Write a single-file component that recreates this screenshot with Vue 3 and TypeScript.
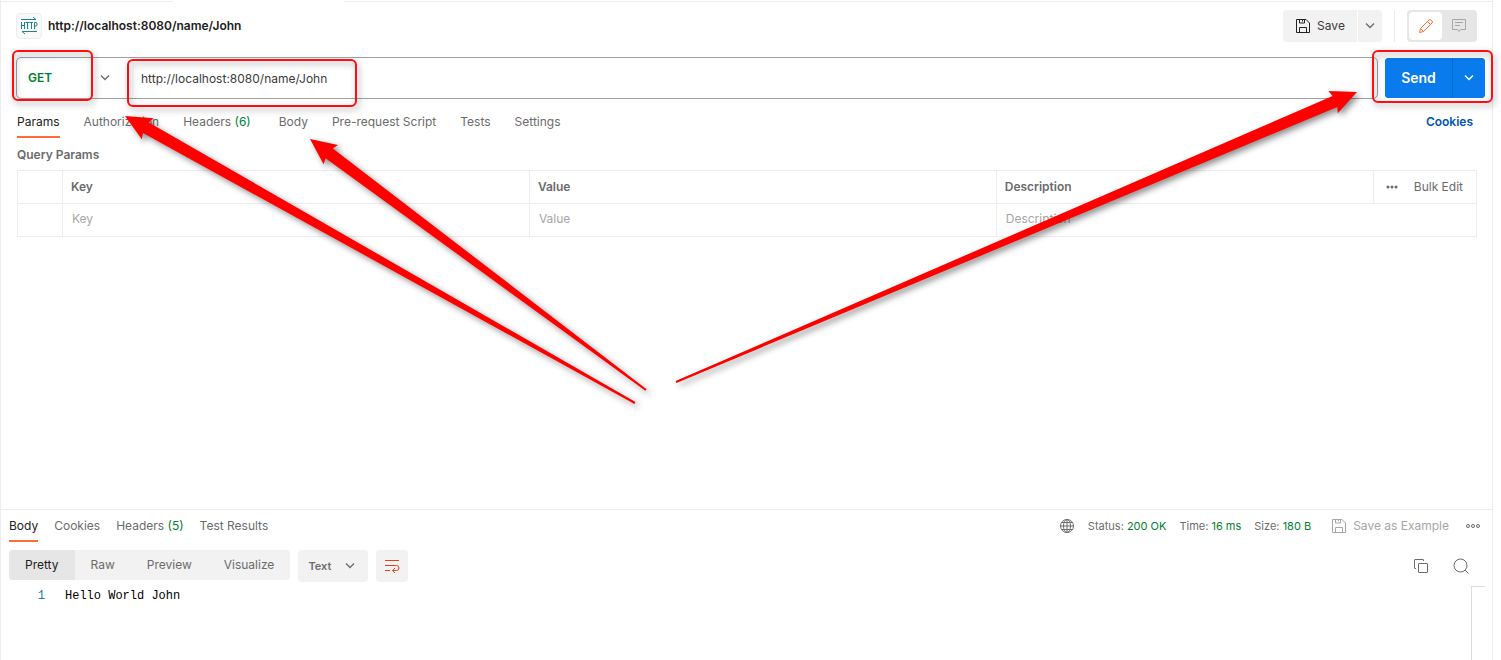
<script setup lang="ts">
import { ref } from 'vue'

interface Tab {
  label: string
  count?: number
}

interface Point {
  x: number
  y: number
}

const method = ref('GET')
const url = ref('http://localhost:8080/name/John')
const format = ref('Text')

const requestTabs: Tab[] = [
  { label: 'Params' },
  { label: 'Authorization' },
  { label: 'Headers', count: 6 },
  { label: 'Body' },
  { label: 'Pre-request Script' },
  { label: 'Tests' },
  { label: 'Settings' },
]
const activeRequestTab = ref('Params')

const responseTabs: Tab[] = [
  { label: 'Body' },
  { label: 'Cookies' },
  { label: 'Headers', count: 5 },
  { label: 'Test Results' },
]
const activeResponseTab = ref('Body')

const views = ['Pretty', 'Raw', 'Preview', 'Visualize']
const activeView = ref('Pretty')

const stats = [
  { label: 'Status:', value: '200 OK' },
  { label: 'Time:', value: '16 ms' },
  { label: 'Size:', value: '180 B' },
]

// Outline of a tapered arrow: a thin tail that widens towards a barbed head.
function arrow(tip: Point, tail: Point): string {
  const length = Math.hypot(tail.x - tip.x, tail.y - tip.y)
  const dx = (tail.x - tip.x) / length
  const dy = (tail.y - tip.y) / length
  const at = (along: number, across: number) =>
    `${(tip.x + dx * along - dy * across).toFixed(1)},${(tip.y + dy * along + dx * across).toFixed(1)}`
  return [at(0, 0), at(26, -12), at(24, -6), at(length, -1), at(length, 1), at(24, 6), at(26, 12)].join(' ')
}

const arrows = [
  arrow({ x: 125, y: 116 }, { x: 635, y: 403 }),
  arrow({ x: 310, y: 139 }, { x: 646, y: 390 }),
  arrow({ x: 1357, y: 92 }, { x: 676, y: 382 }),
]
</script>

<template>
  <main class="workspace">
    <div class="strip"><i class="strip-left"></i><i class="strip-tab"></i><i class="strip-right"></i></div>

    <section class="request">
      <header class="titlebar">
        <span class="http-icon">
          <svg width="18" height="18" viewBox="0 0 18 18" fill="none" stroke="#1a8296" aria-hidden="true">
            <path d="M1 2.5h15M13 0l3 2.5M17 14.5H2M5 17l-3-2.5" />
            <path d="M1.5 5v7M4.5 5v7M1.500 8.500h3M5.500 5.500h4M7.500 5.500V12M9.500 5.500h3.500M11.500 5.500V12M14.500 12V5.500h1.500q1 0 1 1.750t-1 1.750h-1.500" />
          </svg>
        </span>
        <h1>{{ url }}</h1>
        <div class="save-group">
          <button class="save" type="button">
            <svg width="16" height="16" viewBox="0 0 16 16" fill="none" stroke="#212121" aria-hidden="true">
              <path d="M1.500 1.500h9.500l3.500 3.500v9.500h-13zM4.500 1.500v3.500h5v-3.500M4.500 14.500v-5h7v5M7.500 2v1.500" />
            </svg>
            Save
          </button>
          <button class="save-more" type="button" aria-label="More save options">
            <svg width="10" height="6" viewBox="0 0 10 6" fill="none" stroke="#6b6b6b" stroke-width="1.3" aria-hidden="true"><path d="M1 .5l4 4 4-4" /></svg>
          </button>
        </div>
        <div class="mode">
          <button class="on" type="button" aria-label="Edit">
            <svg width="16" height="16" viewBox="0 0 16 16" fill="none" stroke="#ff6c37" aria-hidden="true">
              <path d="M1.500 14.500l1-4L11 2q1-1 2 0l1 1q1 1 0 2l-8.500 8.500zM9.500 3.500l3 3M2.500 10.500l3 3" />
            </svg>
          </button>
          <button type="button" aria-label="Comments">
            <svg width="16" height="16" viewBox="0 0 16 16" fill="none" stroke="#a6a6a6" aria-hidden="true">
              <path d="M1.500 1.500h13v10h-5L8 13.500l-1.500-2h-5zM4 4.500h8M4 7.500h5" />
            </svg>
          </button>
        </div>
      </header>

      <div class="url-row">
        <div class="url-box">
          <div class="method">
            <select v-model="method" aria-label="Method"><option>GET</option><option>POST</option></select>
            <svg width="10" height="6" viewBox="0 0 10 6" fill="none" stroke="#6b6b6b" stroke-width="1.3" aria-hidden="true"><path d="M1 .5l4 4 4-4" /></svg>
            <i class="mark"></i>
          </div>
          <div class="url-field">
            <input v-model="url" type="text" aria-label="Request URL" />
            <i class="mark"></i>
          </div>
        </div>
        <div class="send-group">
          <button class="send" type="button">Send</button>
          <button class="send-more" type="button" aria-label="More send options">
            <svg width="10" height="6" viewBox="0 0 10 6" fill="none" stroke="#fff" stroke-width="1.3" aria-hidden="true"><path d="M1 .5l4 4 4-4" /></svg>
          </button>
          <i class="mark"></i>
        </div>
      </div>

      <nav class="request-nav">
        <div class="tabs" role="tablist">
          <button
            v-for="tab in requestTabs"
            :key="tab.label"
            type="button"
            role="tab"
            :aria-selected="tab.label === activeRequestTab"
            :class="{ active: tab.label === activeRequestTab, counted: tab.count }"
            @click="activeRequestTab = tab.label"
          >{{ tab.label }}<span v-if="tab.count" class="count"> ({{ tab.count }})</span></button>
        </div>
        <a href="#cookies">Cookies</a>
      </nav>

      <h2>Query Params</h2>
      <table>
        <colgroup><col class="c-check" /><col class="c-field" /><col class="c-field" /><col /><col class="c-tools" /></colgroup>
        <thead>
          <tr>
            <th></th>
            <th>Key</th>
            <th>Value</th>
            <th>Description</th>
            <th>
              <div class="tools">
                <button type="button" aria-label="Column options">
                  <svg width="12" height="4" viewBox="0 0 12 4" fill="#6b6b6b" aria-hidden="true"><circle cx="2" cy="2" r="1.500" /><circle cx="6" cy="2" r="1.500" /><circle cx="10" cy="2" r="1.500" /></svg>
                </button>
                <button type="button">Bulk Edit</button>
              </div>
            </th>
          </tr>
        </thead>
        <tbody>
          <tr>
            <td></td>
            <td><input type="text" placeholder="Key" aria-label="Key" /></td>
            <td><input type="text" placeholder="Value" aria-label="Value" /></td>
            <td colspan="2"><input type="text" placeholder="Description" aria-label="Description" /></td>
          </tr>
        </tbody>
      </table>
    </section>

    <section class="response">
      <div class="response-nav">
        <div class="tabs" role="tablist">
          <button
            v-for="tab in responseTabs"
            :key="tab.label"
            type="button"
            role="tab"
            :aria-selected="tab.label === activeResponseTab"
            :class="{ active: tab.label === activeResponseTab }"
            @click="activeResponseTab = tab.label"
          >{{ tab.label }}<span v-if="tab.count" class="count"> ({{ tab.count }})</span></button>
        </div>
        <div class="stats">
          <svg width="16" height="16" viewBox="0 0 16 16" fill="none" stroke="#6b6b6b" aria-hidden="true">
            <circle cx="8" cy="8" r="6.500" /><ellipse cx="8" cy="8" rx="3.500" ry="6.500" /><path d="M8 1.500v13M2.500 4.500h11M1.500 8h13M2.500 11.500h11" />
          </svg>
          <span v-for="s in stats" :key="s.label">{{ s.label }} <b>{{ s.value }}</b></span>
        </div>
        <button class="example" type="button" disabled>
          <svg width="16" height="16" viewBox="0 0 16 16" fill="none" stroke="#a6a6a6" aria-hidden="true">
            <path d="M1.500 1.500h9.500l3.500 3.500v9.500h-13zM4.500 1.500v3.500h5v-3.500M4.500 14.500v-5h7v5M7.500 2v1.500" />
          </svg>
          Save as Example
        </button>
        <button class="dots" type="button" aria-label="More">
          <svg width="16" height="6" viewBox="0 0 16 6" fill="none" stroke="#6b6b6b" aria-hidden="true"><circle cx="3" cy="3" r="1.500" /><circle cx="8" cy="3" r="1.500" /><circle cx="13" cy="3" r="1.500" /></svg>
        </button>
      </div>

      <div class="toolbar">
        <div class="views">
          <button v-for="v in views" :key="v" type="button" :class="{ active: v === activeView }" @click="activeView = v">{{ v }}</button>
        </div>
        <div class="format">
          <select v-model="format" aria-label="Format"><option>Text</option><option>JSON</option></select>
          <svg width="10" height="6" viewBox="0 0 10 6" fill="none" stroke="#6b6b6b" stroke-width="1.3" aria-hidden="true"><path d="M1 .5l4 4 4-4" /></svg>
        </div>
        <button class="wrap" type="button" aria-label="Wrap lines">
          <svg width="16" height="16" viewBox="0 0 16 16" fill="none" stroke="#e0431a" aria-hidden="true">
            <path d="M1 2.500h14M1 7.500h11.500q2.500 0 2.500 2.500t-2.500 2.500h-4M1 12.500h5M11 10l-2.500 2.500L11 15" />
          </svg>
        </button>
        <div class="actions">
          <button type="button" aria-label="Copy">
            <svg width="16" height="16" viewBox="0 0 16 16" fill="none" stroke="#6b6b6b" aria-hidden="true">
              <path d="M10.500 3V2q0-.5-.5-.5H2q-.5 0-.5.5v8q0 .5.500.500h1" /><rect x="5.500" y="5.500" width="9" height="9" rx=".5" />
            </svg>
          </button>
          <button type="button" aria-label="Search">
            <svg width="16" height="16" viewBox="0 0 16 16" fill="none" stroke="#6b6b6b" aria-hidden="true"><circle cx="7.500" cy="7.500" r="6.500" /><path d="M12 12l3.500 3.500" /></svg>
          </button>
        </div>
      </div>

      <div class="editor">
        <pre><span class="line-no">1</span><code>Hello World John</code></pre>
        <div class="minimap"></div>
      </div>
    </section>

    <svg class="arrows" width="1501" height="660" aria-hidden="true">
      <polygon v-for="points in arrows" :key="points" :points="points" fill="#f00" />
    </svg>
  </main>
</template>

<style>
body {
  margin: 0;
  background: #fff;
}
</style>

<style scoped>
.workspace {
  position: relative;
  display: flex;
  flex-direction: column;
  box-sizing: border-box;
  min-height: 100vh;
  margin-right: 8px;
  border: solid #ededed;
  border-width: 0 1px;
  color: #6b6b6b;
  font: 12px/16px Inter, "Liberation Sans", sans-serif;
}
button,
input,
select {
  padding: 0;
  border: 0;
  background: none;
  color: inherit;
  font: inherit;
  appearance: none;
  outline: none;
}
svg {
  display: block;
  flex: none;
}
.strip {
  display: flex;
  height: 2px;
}
.strip i {
  box-sizing: border-box;
  border-bottom: 1px solid #ededed;
}
.strip-left {
  width: 172px;
}
.strip .strip-tab {
  width: 171px;
  border-bottom: 0;
}
.strip-right {
  flex: 1;
}
.request {
  flex: 1;
}
.titlebar {
  display: flex;
  align-items: center;
  height: 48px;
  padding: 0 15px;
}
.http-icon {
  display: grid;
  place-items: center;
  box-sizing: border-box;
  width: 26px;
  height: 26px;
  border: 1px solid #ededed;
  border-radius: 4px;
  background: #f9f9f9;
}
h1 {
  flex: 1;
  margin: 0 0 0 6px;
  color: #212121;
  font-size: 12px;
  font-weight: 600;
  line-height: 16px;
}
.save-group {
  display: flex;
  gap: 1px;
  height: 32px;
}
.save,
.save-more {
  display: flex;
  align-items: center;
  justify-content: center;
  background: #f2f2f2;
}
.save {
  gap: 6px;
  width: 74px;
  border-radius: 4px 0 0 4px;
  color: #3b3b3b;
}
.save-more {
  width: 24px;
  border-radius: 0 4px 4px 0;
}
.mode {
  position: relative;
  display: flex;
  box-sizing: border-box;
  width: 70px;
  height: 32px;
  margin-left: 25px;
  padding: 2px;
  border-radius: 4px;
  background: #e6e6e6;
}
.mode::before {
  position: absolute;
  top: 0;
  left: -13px;
  width: 1px;
  height: 32px;
  background: #ededed;
  content: "";
}
.mode button {
  display: grid;
  flex: 1;
  place-items: center;
  border-radius: 4px;
}
.mode .on {
  background: #fff;
}
.url-row {
  display: flex;
  align-items: center;
  margin-top: 7px;
  padding: 0 7px 0 15px;
}
.url-box {
  display: flex;
  flex: 1;
  box-sizing: border-box;
  height: 42px;
  border: 1px solid #a0a0a0;
  border-radius: 5px;
}
.method {
  position: relative;
  display: flex;
  align-items: center;
  width: 110px;
}
.method select {
  width: 100%;
  height: 100%;
  padding-left: 11px;
  color: #007f31;
  font-weight: 600;
}
.method svg,
.format svg {
  position: absolute;
  right: 17px;
  pointer-events: none;
}
.url-field {
  position: relative;
  flex: 1;
}
.url-field input {
  box-sizing: border-box;
  width: 100%;
  height: 40px;
  padding-left: 14px;
  color: #3b3b3b;
}
.mark {
  position: absolute;
  box-sizing: border-box;
  border: 2px solid #ff0d12;
  border-radius: 6px;
  filter: drop-shadow(2px 3px 3px rgb(0 0 0 / 40%));
  pointer-events: none;
}
.method .mark {
  top: -8px;
  left: -5px;
  width: 81px;
  height: 51px;
}
.url-field .mark {
  top: 1px;
  left: 0;
  width: 230px;
  height: 48px;
}
.send-group {
  position: relative;
  display: flex;
  gap: 1px;
  height: 40px;
  margin-left: 7px;
  border-radius: 4px;
  background: #066cd1;
}
.send-group button {
  display: grid;
  place-items: center;
  background: #097bed;
  color: #fff;
  font-size: 14px;
  font-weight: 600;
}
.send-group .send {
  width: 67px;
  border-radius: 4px 0 0 4px;
}
.send-group .send-more {
  width: 32px;
  border-radius: 0 4px 4px 0;
}
.send-group .mark {
  inset: -8px -8px -5px -13px;
}
.request-nav {
  display: flex;
  justify-content: space-between;
  margin-top: 7px;
  padding: 0 19px 0 16px;
}
.request-nav a {
  padding: 8px 0;
  color: #0053b8;
  font-weight: 600;
  text-decoration: none;
}
.tabs {
  display: flex;
}
.tabs button {
  height: 32px;
  padding-top: 1px;
  border-bottom: 2px solid transparent;
  white-space: pre;
}
.tabs .active {
  border-color: #ff6c37;
  color: #212121;
}
.request-nav .tabs {
  gap: 24px;
}
.request-nav .counted {
  margin-right: 4px;
}
.count {
  color: #007f31;
}
h2 {
  margin: 9px 16px 7px;
  font-size: 12px;
  font-weight: 600;
  line-height: 16px;
}
table {
  width: calc(100% - 31px);
  margin-left: 16px;
  border-collapse: collapse;
  table-layout: fixed;
}
.c-check {
  width: 45px;
}
.c-field {
  width: 32%;
}
.c-tools {
  width: 103px;
}
th,
td {
  box-sizing: border-box;
  height: 33px;
  padding: 0 8px;
  border: 1px solid #ededed;
  font-weight: 600;
  text-align: left;
}
td input {
  display: block;
  box-sizing: border-box;
  width: 100%;
  padding: 0 0 2px 1px;
  font-weight: 400;
}
td input::placeholder {
  color: #a6a6a6;
  opacity: 1;
}
.tools {
  display: flex;
  justify-content: space-between;
  padding: 0 5px 0 4px;
}
.tools button {
  display: flex;
  align-items: center;
  font-weight: 400;
}
.response {
  display: flex;
  flex-direction: column;
  min-height: 151px;
  box-sizing: border-box;
  border-top: 1px solid #ededed;
}
.response-nav {
  display: flex;
  align-items: center;
  height: 32px;
  padding: 0 11px 0 8px;
}
.response-nav .tabs {
  flex: 1;
  gap: 16px;
}
.stats {
  display: flex;
  align-items: center;
  gap: 13px;
  font-size: 11px;
}
.stats b {
  color: #007f31;
  font-weight: 400;
}
.example {
  display: flex;
  align-items: center;
  gap: 6px;
  margin-left: 20px;
  color: #a6a6a6;
}
.dots {
  margin-left: 16px;
}
.toolbar {
  display: flex;
  align-items: flex-start;
  gap: 8px;
  margin-top: 8px;
  padding: 0 23px 0 8px;
}
.views {
  display: flex;
  height: 30px;
  border-radius: 4px;
  background: #f2f2f2;
  overflow: hidden;
}
.views button {
  padding: 0 16px;
}
.views .active {
  background: #e6e6e6;
  color: #212121;
}
.format {
  position: relative;
  display: flex;
  align-items: center;
  width: 70px;
  height: 32px;
  border-radius: 4px;
  background: #f2f2f2;
}
.format select {
  width: 100%;
  height: 100%;
  padding-left: 10px;
  font-size: 11px;
  font-weight: 600;
}
.format svg {
  right: 13px;
}
.wrap {
  display: grid;
  place-items: center;
  width: 32px;
  height: 32px;
  border-radius: 4px;
  background: #f2f2f2;
}
.actions {
  display: flex;
  gap: 24px;
  height: 32px;
  margin-left: auto;
}
.editor {
  display: flex;
  flex: 1;
  justify-content: space-between;
  margin-top: 4px;
  padding-right: 7px;
}
pre {
  margin: 1px 0 0;
  color: #000;
  font: 12px/18px "Liberation Mono", monospace;
}
.line-no {
  display: inline-block;
  width: 44px;
  margin-right: 20px;
  color: #237893;
  text-align: right;
}
code {
  font: inherit;
}
.minimap {
  width: 13px;
  border: solid #dcdcdc;
  border-width: 1px 0 0 1px;
}
.arrows {
  position: absolute;
  top: 0;
  left: -1px;
  filter: drop-shadow(3px 3px 3px rgb(0 0 0 / 45%));
  pointer-events: none;
}
</style>
